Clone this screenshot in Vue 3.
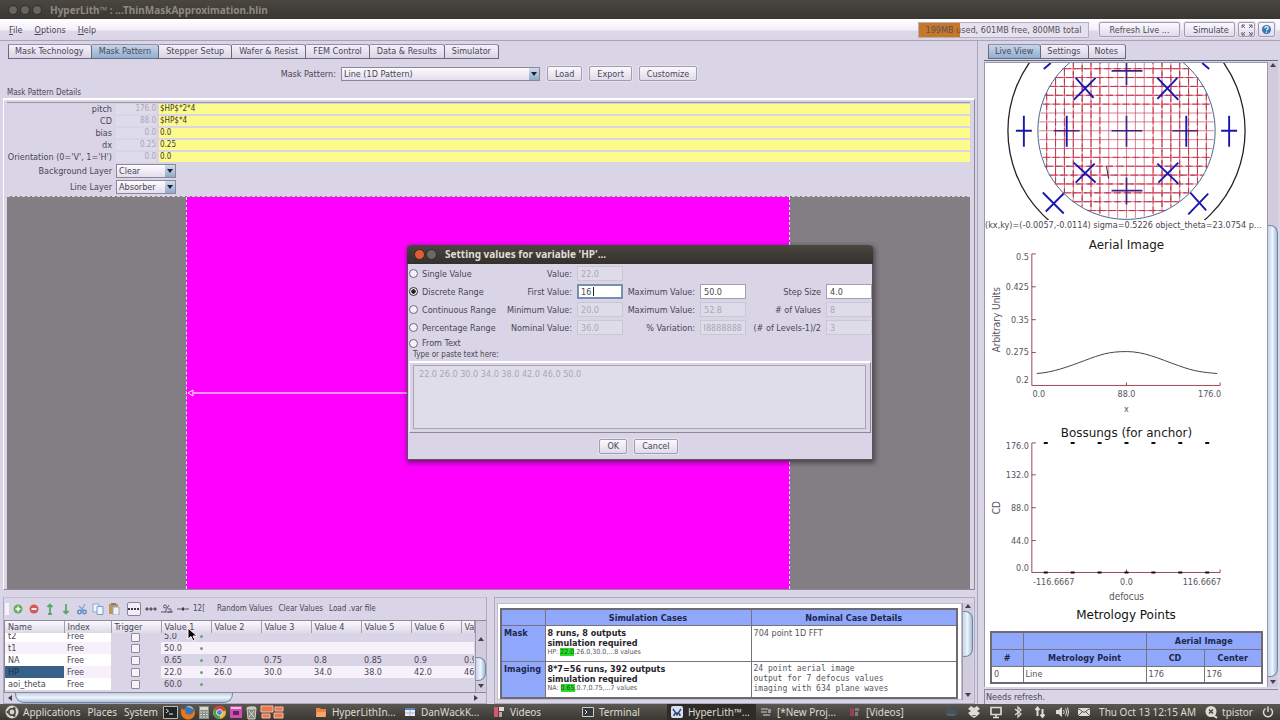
<script setup>
import { ref } from 'vue'

const tabs = ['Mask Technology', 'Mask Pattern', 'Stepper Setup', 'Wafer & Resist', 'FEM Control', 'Data & Results', 'Simulator']
const activeTab = ref('Mask Pattern')

const params = [
  { id: 'pitch', label: 'pitch', value: '176.0', expr: '$HP$*2*4' },
  { id: 'cd', label: 'CD', value: '88.0', expr: '$HP$*4' },
  { id: 'bias', label: 'bias', value: '0.0', expr: '0.0' },
  { id: 'dx', label: 'dx', value: '0.25', expr: '0.25' },
  { id: 'orient', label: "Orientation (0='V', 1='H')", value: '0.0', expr: '0.0' }
]

const mode = ref('Discrete Range')
const modes = [
  { name: 'Single Value', on: false, fields: [['Value:', '22.0']] },
  { name: 'Discrete Range', on: true, fields: [['First Value:', '16'], ['Maximum Value:', '50.0'], ['Step Size', '4.0']] },
  { name: 'Continuous Range', on: false, fields: [['Minimum Value:', '20.0'], ['Maximum Value:', '52.8'], ['# of Values', '8']] },
  { name: 'Percentage Range', on: false, fields: [['Nominal Value:', '36.0'], ['% Variation:', '38888888'], ['(# of Levels-1)/2', '3']] },
  { name: 'From Text', on: false, fields: [] }
]

const variables = [
  { name: 't2', v: ['5.0', '', '', '', '', '', ''] },
  { name: 't1', v: ['50.0', '', '', '', '', '', ''] },
  { name: 'NA', v: ['0.65', '0.7', '0.75', '0.8', '0.85', '0.9', '0.95'] },
  { name: 'HP', v: ['22.0', '26.0', '30.0', '34.0', '38.0', '42.0', '46.0'] },
  { name: 'aoi_theta', v: ['60.0', '', '', '', '', '', ''] }
]

// Pupil grid: chords of the inner circle, one every `step` units
const radius = 89
const step = 8.9
const chords = []
for (let n = -9; n <= 9; n++) {
  const d = n * step
  chords.push({ n, d, h: Math.sqrt(radius * radius - d * d) - 1 })
}
const bossX = [61, 88, 115, 142, 169, 196, 223]
const aerialTicks = [[23, 26, '0.5'], [56, 56, '0.425'], [89, 89, '0.35'], [122, 121, '0.275'], [155, 150, '0.2']]
const bossTicks = [[19, 22, '176.0'], [51, 51, '132.0'], [84, 84, '88.0'], [117, 117, '44.0'], [149, 145, '0.0']]
</script>

<template>
  <div class="desktop">
    <header class="titlebar">
      <span class="dots"><i></i><i></i><i></i></span>
      <span>HyperLith™ : ...ThinMaskApproximation.hlin</span>
    </header>

    <div class="menubar">
      <nav class="menus">
        <button><u>F</u>ile</button><button><u>O</u>ptions</button><button><u>H</u>elp</button>
      </nav>
      <div class="memory">199MB used, 601MB free, 800MB total</div>
      <button class="btn wide">Refresh Live ...</button>
      <button class="btn sim">Simulate</button>
      <button class="btn square" aria-label="Full screen">
        <svg width="12" height="12" viewBox="0 0 12 12"><path d="M1 4V1h3M8 1h3v3M11 8v3H8M4 11H1V8M1 1l3 3M11 1 8 4M11 11 8 8M1 11l3-3" fill="none" stroke="#625e68" /></svg>
      </button>
      <button class="btn square" aria-label="Help">
        <svg width="11" height="11" viewBox="0 0 11 11"><circle cx="5.500" cy="5.500" r="4.500" fill="#3478b8" /><path d="M3.800 4.200c0-2 3.600-2 3.400 0 0 1.200-1.600 1.100-1.600 2.300M5.500 7.500v1.200" fill="none" stroke="#fff" stroke-width="1.200" /></svg>
      </button>
    </div>

    <div class="workspace">
      <section class="left">
        <div class="tabs">
          <button v-for="t in tabs" :key="t" :class="{ active: t === activeTab }" @click="activeTab = t">{{ t }}</button>
        </div>
        <div class="pattern-row">
          <label for="pattern">Mask Pattern:</label>
          <span class="pick long"><select id="pattern"><option>Line (1D Pattern)</option></select></span>
          <button class="btn">Load</button>
          <button class="btn">Export</button>
          <button class="btn">Customize</button>
        </div>
        <h3 class="caption">Mask Pattern Details</h3>
        <div class="details">
          <div v-for="p in params" :key="p.id" class="param">
            <label :for="p.id">{{ p.label }}</label>
            <output>{{ p.value }}</output>
            <input :id="p.id" :value="p.expr" />
          </div>
          <div class="layer">
            <label for="bg">Background Layer</label>
            <span class="pick"><select id="bg"><option>Clear</option></select></span>
          </div>
          <div class="layer">
            <label for="ln">Line Layer</label>
            <span class="pick"><select id="ln"><option>Absorber</option></select></span>
          </div>
          <div class="canvas">
            <div class="mask"><svg class="arrow" width="8" height="8" viewBox="0 0 8 8"><path d="M6 1 1 4l5 3z" fill="#f0f" stroke="#fff" /></svg><span class="extent"></span></div>
          </div>
        </div>

        <div class="bottom">
          <div class="variables">
            <div class="tools">
              <span class="grip"></span>
              <button aria-label="Add"><svg viewBox="0 0 12 12"><circle cx="6" cy="6" r="4.500" fill="#68ac5c" /><path d="M6 3.500v5M3.500 6h5" stroke="#fff" stroke-width="1.500" /></svg></button>
              <button aria-label="Remove"><svg viewBox="0 0 12 12"><circle cx="6" cy="6" r="4.500" fill="#d85858" /><path d="M3.500 6h5" stroke="#fff" stroke-width="1.800" /></svg></button>
              <button aria-label="Move up"><svg viewBox="0 0 12 12"><path d="M6 11V2M3.500 4 6 1.500 8.500 4M4 11h4" fill="none" stroke="#5fa56f" stroke-width="1.800" /></svg></button>
              <button aria-label="Move down"><svg viewBox="0 0 12 12"><path d="M6 1v9M3.500 8 6 10.500 8.500 8" fill="none" stroke="#5fa56f" stroke-width="1.800" /></svg></button>
              <button aria-label="Cut"><svg viewBox="0 0 12 12"><path d="M9 1 5 8M3 3l5 5" stroke="#88a4c8" stroke-width="1.300" /><circle cx="3.500" cy="9" r="1.800" fill="none" stroke="#4f84c4" stroke-width="1.300" /><circle cx="8.500" cy="9" r="1.800" fill="none" stroke="#4f84c4" stroke-width="1.300" /></svg></button>
              <button aria-label="Copy"><svg viewBox="0 0 12 12"><path d="M1 1h6v8H1z" fill="#eef4fc" stroke="#8cacd4" /><path d="M5 3.500h6v8H5z" fill="#eef4fc" stroke="#7c9ccc" /></svg></button>
              <button aria-label="Paste"><svg viewBox="0 0 12 12"><path d="M1 1h9v10H1z" fill="#bd965c" /><path d="M3 0h5v2H3z" fill="#837d7a" /><path d="M5 4h6v8H5z" fill="#eef2fa" stroke="#9ca4b8" /></svg></button>
              <button class="boxed" aria-label="Uniform steps"><svg viewBox="0 0 12 12"><path d="M0 6h12" stroke="#3c3848" stroke-width="2" stroke-dasharray="2 1" /></svg></button>
              <button aria-label="Wide steps"><svg viewBox="0 0 12 12"><path d="M0 6h12" stroke="#5a5664" /><path d="M1 6h10" stroke="#5a5664" stroke-width="3" stroke-dasharray="2 2" /></svg></button>
              <button aria-label="Percent steps"><svg viewBox="0 0 12 12"><path d="M0 9h12M8 2 4 9" stroke="#5a5664" /><circle cx="4" cy="3.500" r="1.500" fill="none" stroke="#5a5664" /><path d="M7 6h3v3H7" fill="none" stroke="#5a5664" /></svg></button>
              <button aria-label="Nominal"><svg viewBox="0 0 12 12"><path d="M0 6h12" stroke="#5a5664" /><path d="M5 6h2" stroke="#3a3644" stroke-width="3" /></svg></button>
              <button class="num" aria-label="Text values">12[</button>
              <button class="word first">Random Values</button>
              <button class="word">Clear Values</button>
              <button class="word">Load .var file</button>
            </div>
            <div class="vargrid">
              <div class="clip">
                <table class="vars">
                  <colgroup><col class="c1" /><col class="c2" /><col v-for="n in 7" :key="n" class="c3" /><col class="c4" /></colgroup>
                  <thead>
                    <tr><th>Name</th><th>Index</th><th>Trigger</th><th v-for="n in 6" :key="n">Value {{ n }}</th><th>Value 7</th></tr>
                  </thead>
                  <tbody>
                    <tr v-for="(r, i) in variables" :key="r.name" :class="{ cut: i === 0, picked: r.name === 'HP' }">
                      <td class="name"><div>{{ r.name }}</div></td>
                      <td class="idx"><div>Free</div></td>
                      <td class="trig"><div><input type="checkbox" :aria-label="'Trigger ' + r.name" /></div></td>
                      <td v-for="(v, k) in r.v" :key="k"><div>{{ v }}<b v-if="k === 0" class="dot"></b></div></td>
                    </tr>
                  </tbody>
                </table>
              </div>
              <div class="vbar small"><i class="up"></i><span class="thumb"></span><i class="down"></i></div>
            </div>
            <div class="hbar"><i class="lt"></i><span class="thumb"></span><i class="rt"></i></div>
          </div>

          <div class="cases">
            <div class="page">
              <table class="report">
                <colgroup><col class="k" /><col /><col /></colgroup>
                <thead><tr><th></th><th>Simulation Cases</th><th>Nominal Case Details</th></tr></thead>
                <tbody>
                  <tr>
                    <th scope="row">Mask</th>
                    <td><strong>8 runs, 8 outputs<br />simulation required</strong><small>HP: <mark>22.0</mark>,26.0,30.0,...8 values</small></td>
                    <td>704 point 1D FFT</td>
                  </tr>
                  <tr>
                    <th scope="row">Imaging</th>
                    <td><strong>8*7=56 runs, 392 outputs<br />simulation required</strong><small>NA: <mark>0.65</mark>,0.7,0.75,...7 values</small></td>
                    <td class="mono">24 point aerial image<br />output for 7 defocus values<br />imaging with 634 plane waves</td>
                  </tr>
                </tbody>
              </table>
            </div>
            <div class="vbar mid"><i class="up"></i><span class="thumb"></span><i class="down"></i></div>
          </div>
        </div>
      </section>

      <aside class="right">
        <div class="tabs rtabs">
          <button class="active">Live View</button><button>Settings</button><button>Notes</button>
        </div>
        <div class="viewer">
          <div class="sheet">
            <svg class="pupil" viewBox="0 0 283 158">
              <circle cx="142" cy="68" r="119" fill="none" stroke="#222" stroke-width="1.300" />
              <g transform="translate(142 68)">
                <g v-for="c in chords" :key="c.n">
                  <path :d="`M${-c.h} ${c.d}H${c.h}M${c.d} ${-c.h}V${c.h}`" fill="none" stroke="#c84a62" stroke-width="0.700" />
                  <path v-if="Math.abs(c.n) > 2" :d="`M${-c.h} ${c.d}H${c.h}M${c.d} ${-c.h}V${c.h}`" fill="none" stroke="#d83048" stroke-width="1" stroke-dasharray="7 3" />
                  <path v-if="Math.abs(c.n) > 3" :d="`M${-c.h - 2} ${c.d}H${c.h + 2}M${c.d} ${-c.h}V${c.h}`" fill="none" stroke="#6c5060" stroke-width="0.700" stroke-dasharray="3 8" />
                </g>
                <path d="M-20 36 -18 48" stroke="#222" />
                <circle r="89" fill="none" stroke="#48688c" />
              </g>
              <path d="M127 68h31M142 53v31M127 8h31M142 0v22M127 128h31M142 115v27" fill="none" stroke="#452080" stroke-width="1.700" />
              <path d="M69 68h26M188 68h26" stroke="#582078" stroke-width="1.700" />
              <path d="M82 53v31M202 53v31M39 53v31M31 68h16M245 53v31M237 68h16M91 15l18 20M111 15 89 37M173 15l21 22M193 15l-20 21M89 100l22 20M110 101 91 120M173 101l21 20M194 100l-20 20M58 130l21 21M79 131 61 149M224 131l-20 21M206 130l16 18M59 6l7-6M218 0l7 6" fill="none" stroke="#1818b0" stroke-width="1.900" />
            </svg>
            <p class="readout">(kx,ky)=(-0.0057,-0.0114) sigma=0.5226 object_theta=23.0754 phi=-116.56</p>
            <svg class="chart" viewBox="0 0 283 193">
              <text class="title" x="142" y="18">Aerial Image</text>
              <path d="M51 23h-4v132h189v-3M47 56h4M47 89h4M47 122h4M142 155v-3" fill="none" stroke="#9c4858" />
              <path d="M52 143C68 142 84 136 100 130S124 121 142 121s32 7 52 14c16 6 26 7 39 8" fill="none" stroke="#444" />
              <text v-for="t in aerialTicks" :key="t[2]" class="tick" x="44" :y="t[1] + 3">{{ t[2] }}</text>
              <text class="mid" x="54" y="167">0.0</text><text class="mid" x="142" y="167">88.0</text><text class="tick" x="237" y="167">176.0</text>
              <text class="mid" x="142" y="182">x</text>
              <text class="mid axis" transform="translate(15 89) rotate(-90)">Arbitrary Units</text>
            </svg>
            <svg class="chart" viewBox="0 0 283 180">
              <text class="title" x="142" y="13">Bossungs (for anchor)</text>
              <path d="M51 19h-4v130h189v-3M47 51h4M47 84h4M47 117h4M142 149v-3" fill="none" stroke="#9c4858" />
              <path v-for="x in bossX" :key="x" :d="`M${x - 2} 19h4M${x - 2} 149h4`" stroke="#111" stroke-width="2" />
              <text v-for="t in bossTicks" :key="t[2]" class="tick" x="44" :y="t[1] + 3">{{ t[2] }}</text>
              <text class="mid" x="69" y="162">-116.6667</text><text class="mid" x="142" y="162">0.0</text><text class="tick" x="237" y="162">116.6667</text>
              <text class="mid axis" x="142" y="177">defocus</text>
              <text class="mid axis" transform="translate(15 84) rotate(-90)">CD</text>
            </svg>
            <h2>Metrology Points</h2>
            <table class="report points">
              <colgroup><col class="p1" /><col /><col class="p2" /><col class="p2" /></colgroup>
              <thead>
                <tr><th></th><th></th><th colspan="2">Aerial Image</th></tr>
                <tr><th>#</th><th>Metrology Point</th><th>CD</th><th>Center</th></tr>
              </thead>
              <tbody><tr><td>0</td><td>Line</td><td>176</td><td>176</td></tr></tbody>
            </table>
          </div>
          <div class="vbar big"><i class="up"></i><span class="thumb"></span><i class="down"></i></div>
        </div>
        <div class="status">Needs refresh.</div>
      </aside>
    </div>

    <footer class="taskbar">
      <svg width="14" height="14" viewBox="0 0 14 14"><circle cx="7" cy="7" r="6.500" fill="#d8d4cc" /><circle cx="7" cy="7" r="3.200" fill="none" stroke="#4a4640" stroke-width="1.500" /><circle cx="2.800" cy="7" r="1.300" fill="#4a4640" /><circle cx="9.200" cy="3.400" r="1.300" fill="#4a4640" /><circle cx="9.200" cy="10.600" r="1.300" fill="#4a4640" /></svg>
      <nav class="gnome"><button>Applications</button><button>Places</button><button>System</button></nav>
      <div class="launch">
        <svg width="15" height="13" viewBox="0 0 15 13"><path d="M.5.500h14v12H.5z" fill="#1f2424" stroke="#b8b8b0" /><path d="m3 3 2.500 2L3 7M6 8h4" fill="none" stroke="#e8e8e8" /></svg>
        <svg width="16" height="15" viewBox="0 0 16 15"><circle cx="8" cy="7" r="5.500" fill="#3f74b4" /><path d="M2 2C-1 9 3 15 9 14.500c6-1 7-7 5-11 0 4-2 6-5 6-4 0-4-3-3-4-2 0-4-1-4-3.500z" fill="#e67820" /><path d="M6 2c3-2 7-1 8 3-2-2-5-3-8-3z" fill="#9cc8ec" /></svg>
        <svg width="12" height="15" viewBox="0 0 12 15"><path d="M1 1h10v13H1z" fill="#8c8c88" /><path d="M2 2h8v3H2z" fill="#d4dccc" /><path d="M2 7h8M2 9.500h8M2 12h8" stroke="#ddd" stroke-dasharray="2 1" /></svg>
        <svg width="15" height="15" viewBox="0 0 15 15"><circle cx="7.500" cy="7.500" r="6.500" fill="#e8bc38" /><path d="M7.500 7.500 2 4C4-.5 12-.5 13.600 5.500z" fill="#d44434" /><path d="M7.500 7.500 8 14C3 14 0 9 2 4z" fill="#4c9c54" /><circle cx="7.500" cy="7.500" r="3" fill="#4c88cc" stroke="#eee" /></svg>
        <svg width="14" height="14" viewBox="0 0 14 14"><path d="M1 1h12v12H1z" fill="#d050b0" /><path d="M2 2h10v2H2z" fill="#f0c8e4" /><path d="M4 6h6v4H4z" fill="#702060" /></svg>
        <svg width="13" height="15" viewBox="0 0 13 15"><path d="M2 3h9l-1 11H3z" fill="#88887f" stroke="#d0d0c8" /><ellipse cx="6.500" cy="3" rx="4.800" ry="1.800" fill="#c8c8c4" /><path d="M4 6l5 6M9 6l-5 6" stroke="#d8d8d4" /></svg>
        <svg width="25" height="14" viewBox="0 0 25 14"><path d="M1 1h12v6H1zM15 2h8v4h-8zM2 9h8v4H2zM14 8h9v5h-9z" fill="#e87850" stroke="#f8c0a8" /></svg>
      </div>
      <div class="tasks">
        <button><svg viewBox="0 0 12 12"><path d="M1 2h4l1 1h5v8H1z" fill="#e88444" /><path d="M2 6h9l-1 5H1z" fill="#f4a868" /></svg>HyperLithIn...</button>
        <button><svg viewBox="0 0 12 12"><path d="M1 2h10v8H1z" fill="#e8ecf8" /><path d="M1 2h10v2H1z" fill="#5c80c0" /><path d="M1 7h10M6 4v6" stroke="#a8b4d0" /></svg>DanWackK...</button>
        <button><svg viewBox="0 0 12 12"><path d="M1 1h4v10H1z" fill="#d85870" /><path d="M6 1h5v4H6z" fill="#ecd4d8" /><path d="M6 6h3v5H6z" fill="#c8a0a8" /></svg>Videos</button>
        <button><svg viewBox="0 0 12 12"><path d="M.5 1.500h11v9H.5z" fill="#343838" stroke="#ccc" /><path d="m3 4 2 2-2 2" fill="none" stroke="#eee" /></svg>Terminal</button>
        <button class="current"><svg viewBox="0 0 12 12"><rect width="12" height="12" rx="2" fill="#d8e0f0" /><path d="M2 3l4 6 4-6M3 10c0-4 6-4 6 0" fill="none" stroke="#344c80" stroke-width="1.500" /></svg>HyperLith™...</button>
        <button><svg viewBox="0 0 12 12"><path d="M1 3h7M1 6h6M3 9h7" stroke="#908c84" stroke-width="1.800" /><path d="M8 3h3v4H8z" fill="#8898a0" /></svg>[*New Proj...</button>
        <button><svg viewBox="0 0 12 12"><path d="M1 2h4v8H1z" fill="#944450" /><path d="M6 2h4v3H6zM6 6h3v4H6z" fill="#88787c" /></svg>[Videos]</button>
      </div>
      <div class="tray">
        <svg viewBox="0 0 14 14"><path d="M1 4h11v6H1z" fill="#44545c" /><path d="M2 10h8" stroke="#77776f" /></svg>
        <svg viewBox="0 0 14 14"><path d="M4 1l3 2 3-2 3 3-3 2 3 2-3 3-3-1-3 1-3-3 3-2-3-2zM4 11l3 2 3-2" fill="#e0dcd4" /></svg>
        <svg viewBox="0 0 14 14"><path d="M2 2.500h10v7H2zM4 12.500h6M7 10v2" fill="none" stroke="#e0dcd4" stroke-width="1.600" /></svg>
        <svg viewBox="0 0 14 14"><path d="m4 4 6 5-3 3V2l3 3-6 5" fill="none" stroke="#e0dcd4" stroke-width="1.200" /></svg>
        <svg viewBox="0 0 14 14"><path d="M4.500 11V3M2.500 5l2-2.500L6.500 5M9.500 4v8M7.500 9.500l2 2.500 2-2.500" fill="none" stroke="#e0dcd4" stroke-width="2" /></svg>
        <svg viewBox="0 0 14 14"><path d="M1 5h2.500L7 2v10L3.500 9H1z" fill="#e0dcd4" /><path d="M8.500 5q1.500 2 0 4M10.500 3.500q2.500 3.500 0 7M12.500 2.500q2 4.500 0 9" fill="none" stroke="#e0dcd4" /></svg>
        <svg viewBox="0 0 14 14"><path d="M1 3h12v8H1z" fill="#e0dcd4" /><path d="m1 3.500 6 4 6-4M1 11l4-4M13 11 9 7" fill="none" stroke="#56524c" /></svg>
        <time>Thu Oct 13 12:15 AM</time>
        <svg viewBox="0 0 14 14"><circle cx="7" cy="6.500" r="5.500" fill="#e0dcd4" /><path d="M9 10l4 3" stroke="#e0dcd4" stroke-width="2" /><path d="m5 4.500 4 4M9 4.500l-4 4" stroke="#4a4640" stroke-width="1.500" /></svg>
        <span class="user">tpistor</span>
        <svg viewBox="0 0 14 14"><path d="M4.500 3.500a4.500 4.500 0 1 0 5 0M7 1.500V7" fill="none" stroke="#e0dcd4" stroke-width="1.400" /></svg>
      </div>
    </footer>

    <div class="dialog" role="dialog" aria-labelledby="dlg">
      <div class="dlg-title"><span class="close"></span><span class="mini"></span><h1 id="dlg">Setting values for variable 'HP'...</h1></div>
      <form class="dlg-body" @submit.prevent>
        <div v-for="m in modes" :key="m.name" class="mode" :class="{ last: !m.fields.length }">
          <label class="radio"><input v-model="mode" type="radio" name="mode" :value="m.name" />{{ m.name }}</label>
          <template v-for="(f, i) in m.fields" :key="i">
            <label class="fl" :for="m.name + i">{{ f[0] }}</label>
            <span v-if="m.on && i === 0" class="focus"><input :id="m.name + i" :value="f[1]" /><i class="caret"></i></span>
            <input v-else :id="m.name + i" :value="f[1]" :disabled="!m.on" :class="{ over: f[1].length > 6 }" />
          </template>
        </div>
        <label class="hint" for="txt">Type or paste text here:</label>
        <div class="well"><textarea id="txt" disabled>22.0 26.0 30.0 34.0 38.0 42.0 46.0 50.0</textarea></div>
        <div class="actions"><button class="btn">OK</button><button class="btn">Cancel</button></div>
      </form>
    </div>

    <svg class="pointer" width="12" height="16" viewBox="0 0 12 16"><path d="M1 1v11l3-2.500L6 14l2-1-2-4h4z" fill="#000" stroke="#fff" /></svg>
  </div>
</template>

<style>
body { margin: 0; background: #d9d5e6; }
</style>

<style scoped>
* { box-sizing: border-box; }
.desktop {
  position: relative; display: flex; flex-direction: column; height: 100vh; min-height: 720px; overflow: hidden;
  background: #d9d5e6; color: #4a4654; font: 9px/12px "DejaVu Sans Condensed", "DejaVu Sans", sans-serif;
}
button, input, select, textarea { font: inherit; color: inherit; margin: 0; padding: 0; border: 0; background: none; border-radius: 0; outline: 0; min-width: 0; }
button { white-space: nowrap; }
h1, h2, h3, p { margin: 0; font-weight: normal; }
svg { display: block; flex: none; }

.titlebar { flex: none; height: 19px; display: flex; align-items: center; gap: 8px; padding-left: 8px; background: linear-gradient(#4a4640, #3a3732); color: #8f8a80; font: bold 10px/18px "Noto Sans", sans-serif; }
.dots { display: flex; gap: 2px; }
.dots i { width: 10px; height: 10px; border-radius: 50%; background: #68645e; border: 1px solid #302e2a; }

.menubar { flex: none; height: 22px; display: flex; align-items: center; padding: 0 5px 0 9px; background: linear-gradient(#fff, #f3eff9 50%, #dcd8e8 60%, #d9d5e6); border-bottom: 1px solid #a8a4b6; }
.menus { display: flex; gap: 12px; flex: 1; font-size: 9px; }
.memory { width: 171px; height: 16px; margin-right: 10px; text-align: center; line-height: 14px; border: 1px solid #b4b0c0; background: linear-gradient(90deg, #c87824 24%, #e6e1ef 24%); color: #57515c; }
.btn { height: 15px; padding: 0 8px; border: 1px solid #a19dae; border-radius: 2px; background: linear-gradient(#fbf9fe, #dfdbea); line-height: 12px; box-shadow: 0 0 0 1px #e6e2ee; }
.menubar .btn { display: grid; place-items: center; }
.wide { width: 81px; margin-right: 4px; }
.sim { width: 51px; margin-right: 3px; }
.square { width: 17px; padding: 0; margin-right: 3px; }
.menubar .square { padding: 0; }
.square:last-child { margin: 0; }

.workspace { flex: 1; min-height: 0; display: grid; grid-template-columns: minmax(0, 1fr) 303px; }
.left { display: flex; flex-direction: column; min-width: 0; min-height: 0; padding: 3px 2px 1px 3px; }
.tabs { flex: none; display: flex; padding-left: 5px; height: 15px; }
.tabs button { padding: 0 7px 0 6px; border: 1px solid #6c6878; border-left-width: 0; border-top-color: #9490a2; background: linear-gradient(#f4f0fa, #d9d5e6); border-radius: 0 3px 0 0; line-height: 13px; }
.left .tabs button + button { padding-left: 7px; }
.tabs button:first-child { border-left-width: 1px; }
.tabs .active { background: linear-gradient(#c8d4ea, #8fb0d0); }
.pattern-row { flex: none; display: flex; align-items: center; justify-content: center; gap: 7px; height: 28px; padding-top: 1px; }
.pattern-row .btn { padding: 0 7px; }
.pattern-row label { margin-right: -2px; }
.pick { position: relative; display: block; width: 60px; height: 14px; border: 1px solid #8a8898; background: linear-gradient(#fdfbff, #e2deec); }
.pick::before { content: ""; position: absolute; right: 0; top: 0; bottom: 0; width: 10px; background: linear-gradient(#d0dcec, #90aac8); }
.pick::after { content: ""; position: absolute; right: 2px; top: 4px; border: 3px solid transparent; border-top: 4px solid #22202c; border-bottom: 0; }
.pick select { position: relative; width: 100%; height: 12px; padding-left: 2px; appearance: none; display: block; line-height: 12px; }
.pick.long { width: 199px; }
.caption { flex: none; padding: 0 4px; font-size: 8px; height: 11px; }
.details { flex: 1; min-height: 0; display: flex; flex-direction: column; padding: 2px 4px 0 3px; border: 1px solid #8c899a; border-left-color: #fff; border-top: 2px solid #fff; border-left-width: 1px; }
.param, .layer { flex: none; display: grid; grid-template-columns: 105px 47px minmax(0, 1fr); align-items: center; height: 12px; }
.param:first-child { border-top: 1px solid #9895a5; height: 13px; }
.param label, .layer label { text-align: right; white-space: nowrap; justify-self: end; }
.param output { text-align: right; color: #aaa6b6; height: 10px; line-height: 10px; margin: 0 3px 0 4px; background: #dedbea; font-size: 8px; }
.param input { height: 10px; line-height: 10px; background: #fdfb8c; padding-left: 1px; font-size: 8px; color: #3c3a34; }
.layer { grid-template-columns: 105px 60px; column-gap: 4px; height: 16px; }
.canvas { flex: 1; min-height: 0; margin-top: 1px; background: #827e84; display: grid; grid-template-columns: 179fr 604fr 180fr; border-top: 1px dashed #d8d4dc; }
.mask { grid-column: 2; background: #f0f; display: flex; align-items: center; border: 1px dashed #f4e4f4; border-width: 0 1px; }
.extent { flex: 1; height: 2px; background: #ff90ff; margin-left: -2px; }

.bottom { flex: none; height: 113px; display: grid; grid-template-columns: 484px minmax(0, 1fr); gap: 7px; padding-top: 7px; }
.variables { min-width: 0; display: flex; flex-direction: column; border: 1px solid #aeaabd; border-top-color: #c4c0d0; }
.tools { height: 22px; flex: none; display: flex; align-items: center; gap: 4px; padding: 0 1px; font-size: 8px; }
.tools button { flex: none; }
.tools button svg { width: 12px; height: 12px; }
.grip { width: 4px; height: 12px; background: #f4f2fa; margin-right: -1px; }
.boxed { border: 1px solid #8884a0; background: #f2eef8; border-radius: 2px; margin-left: 3px; height: 14px; }
.num { font-size: 8px; }
.word { margin-left: 2px; }
.word.first { margin-left: 8px; }
.vargrid { flex: 1; min-height: 0; display: grid; grid-template-columns: minmax(0, 1fr) 11px; border-top: 1px solid #8c899a; border-left: 1px solid #8c899a; }
.clip { overflow: hidden; }
.vars { width: 469px; table-layout: fixed; border-collapse: collapse; }
.c1 { width: 59px; } .c2 { width: 47px; } .c3 { width: 50px; } .c4 { width: 13px; }
.vars th { height: 12px; padding: 0 0 0 3px; font-weight: normal; text-align: left; white-space: nowrap; overflow: hidden; background: linear-gradient(#fbf9fe, #dcd8e8); border-right: 1px solid #a19dae; line-height: 12px; }
.vars td { height: 12px; padding: 0 0 0 3px; }
.vars td div { height: 12px; overflow: hidden; display: flex; align-items: center; white-space: nowrap; }
.vars tr:nth-child(even) td { background: #f7f1fb; }
.vars tr .name, .vars tr .idx { background: #fff; }
.vars tbody tr .trig { background: #d9d5e6; padding-left: 20px; }
.vars .cut td { height: 9px; }
.vars .cut td div { height: 9px; align-items: flex-end; }
.vars .picked .name { background: #386088; color: #17304c; }
.vars input { appearance: none; width: 9px; height: 9px; border: 1px solid #8e8a9e; background: #f6f2fa; border-radius: 1px; }
.dot { width: 3px; height: 3px; background: #68a868; border-radius: 50%; margin: 0 8px 0 auto; }
.cut .dot { margin-bottom: 4px; }

.vbar { display: flex; flex-direction: column; align-items: center; background: #d0ccdc; border-left: 1px solid #9c98aa; min-height: 0; }
.vbar i, .hbar i { flex: none; width: 0; height: 0; border: 3px solid transparent; }
.up { margin: 1px 0 3px; border-bottom: 4px solid #444050 !important; border-top: 0 !important; }
.down { margin: 3px 0; border-top: 4px solid #444050 !important; border-bottom: 0 !important; }
.vbar .thumb { width: 100%; border: 1px solid #7088a8; border-left: 0; border-radius: 0 8px 8px 0; background: linear-gradient(90deg, #c4d4e8, #ecf4fc 50%, #a4bcd8); }
.small .thumb { height: 24px; margin-top: auto; }
.small .up { margin-top: 16px; }
.small .down { margin-bottom: 4px; }
.mid .thumb { height: 46px; margin-bottom: auto; }
.big .thumb { flex: 1; margin-top: 155px; }
.hbar { flex: none; height: 11px; display: flex; align-items: center; padding: 0 8px 0 4px; border-top: 1px solid #8c899a; background: #d9d5e6; }
.lt { border-right: 4px solid #444050 !important; border-left: 0 !important; }
.rt { border-left: 4px solid #444050 !important; border-right: 0 !important; margin-left: auto; }
.hbar .thumb { width: 218px; height: 10px; margin-left: 3px; border: 1px solid #7088a8; border-top: 0; border-radius: 0 0 9px 9px; background: linear-gradient(#c0d0e4, #eef5fc 50%, #b0c4dc); }

.cases { min-width: 0; display: grid; grid-template-columns: minmax(0, 1fr) 11px; padding: 5px 1px 3px 2px; border: 1px solid #aeaabd; }
.page { background: #fff; padding: 4px 3px 0 2px; min-width: 0; border: 1px solid #c0bccc; }
.report { width: 100%; table-layout: fixed; border-collapse: collapse; border: 2px solid #6e6a74; color: #57535e; }
.report td, .report th { border: 1px solid #77737e; padding: 2px; vertical-align: top; text-align: left; line-height: 10px; }
.report th { background: #90a8fc; color: #20264c; font: bold 9px/10px "DejaVu Sans Condensed", "DejaVu Sans", sans-serif; }
.report thead th { text-align: center; height: 16px; padding-top: 3px; }
.report tbody tr { height: 36px; }
.report .k { width: 44px; }
.report strong { display: block; color: #26242c; }
.report small { display: block; font-size: 7px; line-height: 9px; }
.report mark { background: #2cdc2c; color: #185018; }
.report .mono { font-family: "DejaVu Sans Mono", monospace; font-size: 8px; }

.right { display: flex; flex-direction: column; min-width: 0; min-height: 0; padding: 3px 2px 0 6px; border-left: 1px solid #aaa6b8; }
.rtabs { padding-left: 4px; }
.viewer { flex: 1; min-height: 0; margin-top: 1px; padding-top: 1px; border-top: 1px solid #5c6c84; display: grid; grid-template-columns: minmax(0, 1fr) 11px; }
.sheet { background: #fff; border-left: 1px solid #9c98aa; border-top: 1px solid #9c98aa; overflow: hidden; }
.sheet svg { width: 100%; }
.readout { height: 11px; line-height: 11px; white-space: nowrap; overflow: hidden; text-overflow: ellipsis; }
.chart text { font-size: 9px; fill: #57535e; }
.chart .title { font: 12px "DejaVu Sans", sans-serif; text-anchor: middle; fill: #1c1a20; }
.chart .tick { text-anchor: end; }
.chart .mid { text-anchor: middle; }
.chart .axis { font-size: 10px; }
.sheet h2 { font: 12px/24px "DejaVu Sans", sans-serif; text-align: center; color: #111; }
.sheet .points { margin: 4px 4px 0 5px; width: calc(100% - 9px); }
.p1 { width: 32px; } .p2 { width: 58px; }
.sheet .points tr, .sheet .points th { height: 17px; }
.status { flex: none; height: 15px; line-height: 14px; margin-top: 2px; padding-left: 1px; border: 1px solid #8c899a; border-width: 1px 0 0 1px; }

.taskbar { flex: none; height: 16px; display: flex; align-items: center; padding: 0 5px; background: linear-gradient(#5a5650, #3a3834); color: #dedad2; font: 10px/15px "Noto Sans", sans-serif; }
.gnome { display: flex; gap: 7px; margin: 0 5px 0 4px; }
.launch { display: flex; align-items: center; gap: 2px; margin-right: 26px; }
.tasks { flex: 1; min-width: 0; display: grid; grid-template-columns: repeat(7, minmax(0, 89px)); }
.tasks button { display: flex; align-items: center; gap: 5px; height: 16px; padding-left: 4px; overflow: hidden; }
.tasks svg { width: 12px; height: 12px; }
.tasks .current { background: #2e2c29; }
.tray { display: flex; align-items: center; gap: 8px; }
.tray svg { width: 14px; height: 14px; }
.tray .user { margin: 0 0 0 -4px; }

.dialog { position: absolute; left: 0; right: 0; top: 34vh; margin: 0 auto; width: 466px; background: #d9d5e6; border: 1px solid #5a5660; border-top: 0; border-radius: 4px 4px 0 0; box-shadow: 1px 2px 5px 1px rgba(30, 20, 30, .55); }
.dlg-title { display: flex; align-items: center; height: 19px; padding-left: 6px; border-radius: 4px 4px 0 0; margin: 0 -1px; background: linear-gradient(#4a4640, #33312d); }
.dlg-title h1 { margin-left: 8px; font: bold 10px/18px "Noto Sans", sans-serif; color: #e0dcd4; }
.close, .mini { width: 11px; height: 11px; border-radius: 50%; background: #e05c34; border: 1px solid #2c2a26; margin-left: 1px; }
.mini { background: #6c6860; }
.dlg-body { padding: 1px 0 2px 1px; }
.mode { display: grid; grid-template-columns: 92px 66px 46px 67px 46px 1fr 46px; column-gap: 5px; align-items: center; height: 18px; }
.mode.last { height: 13px; }
.radio { display: flex; align-items: center; gap: 4px; white-space: nowrap; }
.radio input { appearance: none; width: 9px; height: 9px; border: 1px solid #6c687a; border-radius: 50%; background: #f4f0fa; }
.radio input:checked { background: radial-gradient(#222 40%, #f4f0fa 50%); border-color: #333; }
.fl { text-align: right; white-space: nowrap; justify-self: end; }
.mode > input, .focus { width: 46px; height: 15px; padding: 0 3px; border: 1px solid #a4a0b4; background: #fff; }
.mode > input:disabled { background: #dfdce9; border-color: #cbc7d8; color: #aba7b7; }
.mode > input.over { direction: rtl; }
.focus { border: 2px solid #7890b0; display: flex; align-items: center; padding: 0 2px; }
.focus input { width: 12px; }
.caret { width: 1px; height: 9px; background: #222; }
.hint { display: block; height: 10px; line-height: 10px; font-size: 8px; padding-left: 4px; }
.well { padding: 2px 4px 3px 3px; border: 1px solid #8c899a; border-top: 2px solid #fff; border-left-color: #f4f2fa; margin: 1px 1px 0 0; }
.well textarea { display: block; width: 100%; height: 64px; resize: none; padding: 2px 5px; background: #e0ddea; border: 1px solid #a8a4b6; color: #aaa6b4; line-height: 12px; }
.actions { display: flex; justify-content: center; gap: 7px; padding: 6px 4px 3px 0; }
.actions .btn { padding: 0 7px; }

.pointer { position: absolute; left: 187px; top: 627px; }
</style>
